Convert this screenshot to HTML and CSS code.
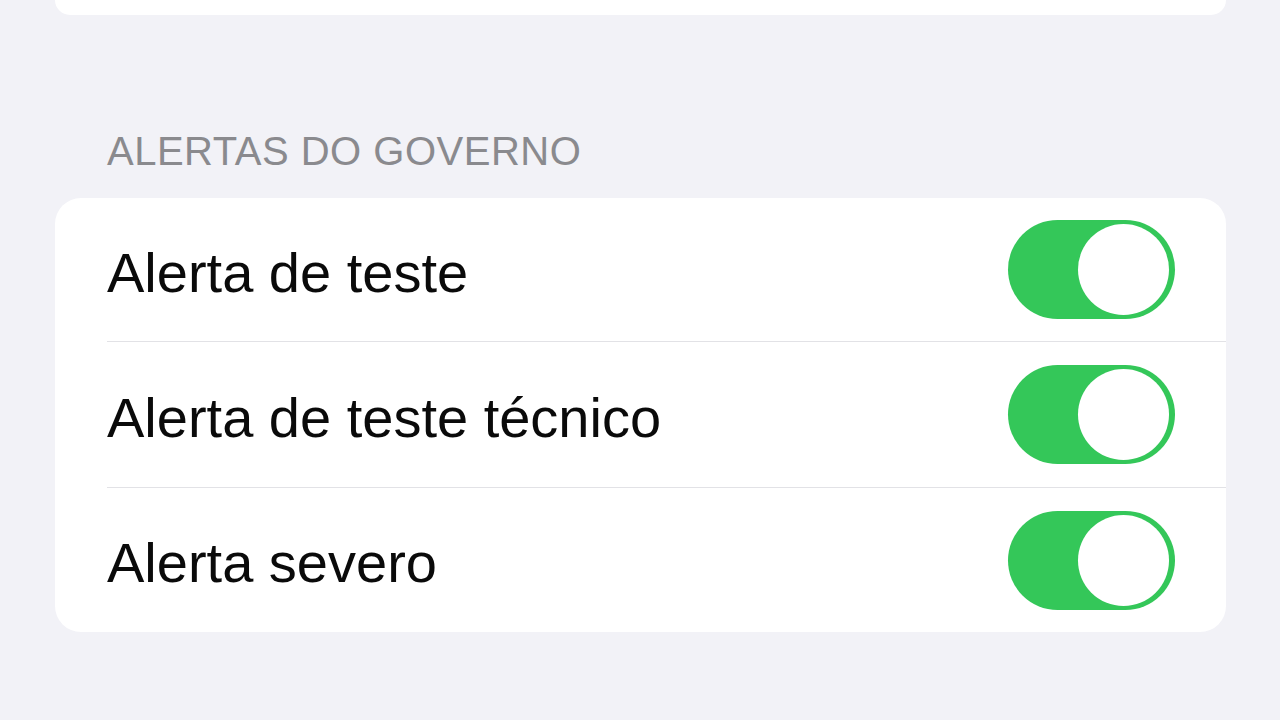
FILE: index.html
```html
<!DOCTYPE html>
<html>
<head>
<meta charset="utf-8"/>
<title>Alertas do Governo</title>
<link rel="stylesheet" href="styles.css">
</head>
<body>

<div class="page">
  <div class="group group-top"></div>

  <h3 class="group-title">ALERTAS DO GOVERNO</h3>

  <div class="group">
    <div class="row">
      <div class="row-body">
        <span class="label">Alerta de teste</span>
        <span class="switch on"><span class="knob"></span></span>
      </div>
    </div>
    <div class="row middle">
      <div class="row-body">
        <span class="label">Alerta de teste técnico</span>
        <span class="switch on"><span class="knob"></span></span>
      </div>
    </div>
    <div class="row last">
      <div class="row-body">
        <span class="label">Alerta severo</span>
        <span class="switch on"><span class="knob"></span></span>
      </div>
    </div>
  </div>
</div>

</body>
</html>
```

FILE: styles.css
```css
body {
   margin: 0;
   background-color: #f2f2f7;
   font-family: "Liberation Sans", Arial, sans-serif;
}

.page {
   padding: 0 54px 0 55px;
}

.group {
   background-color: #fff;
   border-radius: 26px;
}

.group-top {
   height: 15px;
   border-radius: 0 0 26px 26px;
}

.group-title {
   margin: 113px 0 24px 52px;
   font-size: 40px;
   line-height: 46px;
   font-weight: normal;
   letter-spacing: 0.5px;
   color: #8a8a8e;
}

.row {
   padding-left: 52px;
}

.row-body {
   display: flex;
   align-items: center;
   justify-content: space-between;
   height: 144px;
   padding-right: 51px;
   border-bottom: 1px solid #e2e2e6;
   box-sizing: border-box;
}

.row.middle .row-body {
   height: 146px;
}

.row.last .row-body {
   border-bottom: none;
   height: 144px;
}

.label {
   font-size: 56px;
   color: #0a0a0a;
   padding-top: 5px;
}

.switch {
   display: flex;
   align-items: center;
   justify-content: flex-end;
   width: 167px;
   height: 99px;
   padding: 0 6px;
   box-sizing: border-box;
   border-radius: 50px;
   background-color: #e9e9eb;
}

.switch.on {
   background-color: #34c759;
}

.knob {
   width: 91px;
   height: 91px;
   border-radius: 50%;
   background-color: #fff;
}
```
